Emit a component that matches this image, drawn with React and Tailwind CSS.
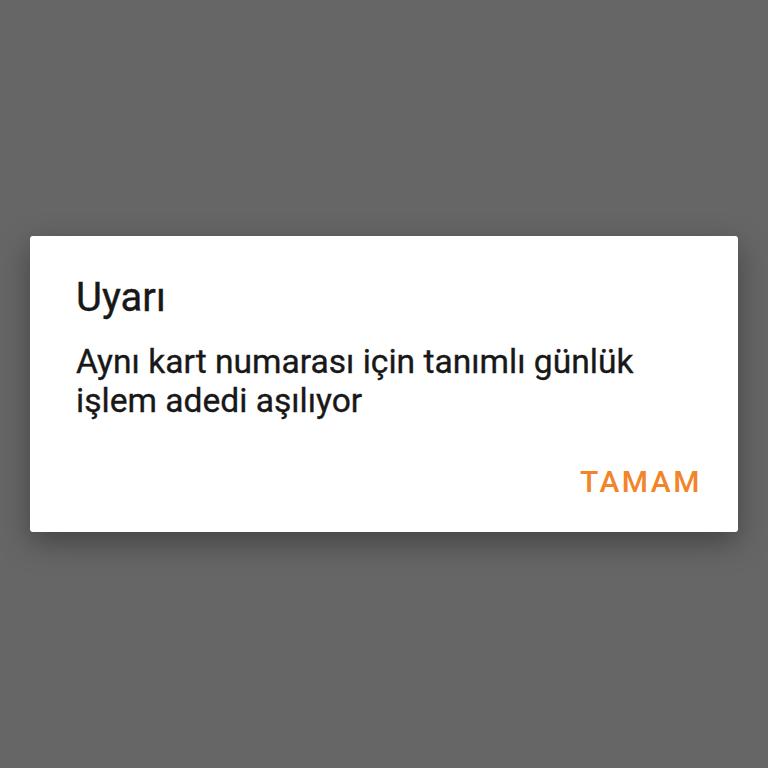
export default function App() {
  return (
    <div className="w-[768px] h-[768px] bg-[#666666] flex items-start justify-center pt-[236px]" style={{ fontFamily: 'Roboto, "Noto Sans", sans-serif' }}>
      <div className="w-[708px] h-[296px] bg-white rounded-[3px] shadow-[0_10px_30px_rgba(0,0,0,0.35)] flex flex-col pl-[46px] pr-[36px]">
        <div className="mt-[38px] text-[40px] leading-[48px] text-[#181818] [-webkit-text-stroke:0.4px_#181818]">Uyarı</div>
        <div className="mt-[20px] text-[33.6px] leading-[39px] text-[#181818] w-[600px] [-webkit-text-stroke:0.35px_#181818]">
          Aynı kart numarası için tanımlı günlük işlem adedi aşılıyor
        </div>
        <div className="mt-[44px] flex justify-end">
          <span className="text-[30px] leading-[36px] font-medium tracking-[2.5px] text-[#f2842a]">TAMAM</span>
        </div>
      </div>
    </div>
  );
}
